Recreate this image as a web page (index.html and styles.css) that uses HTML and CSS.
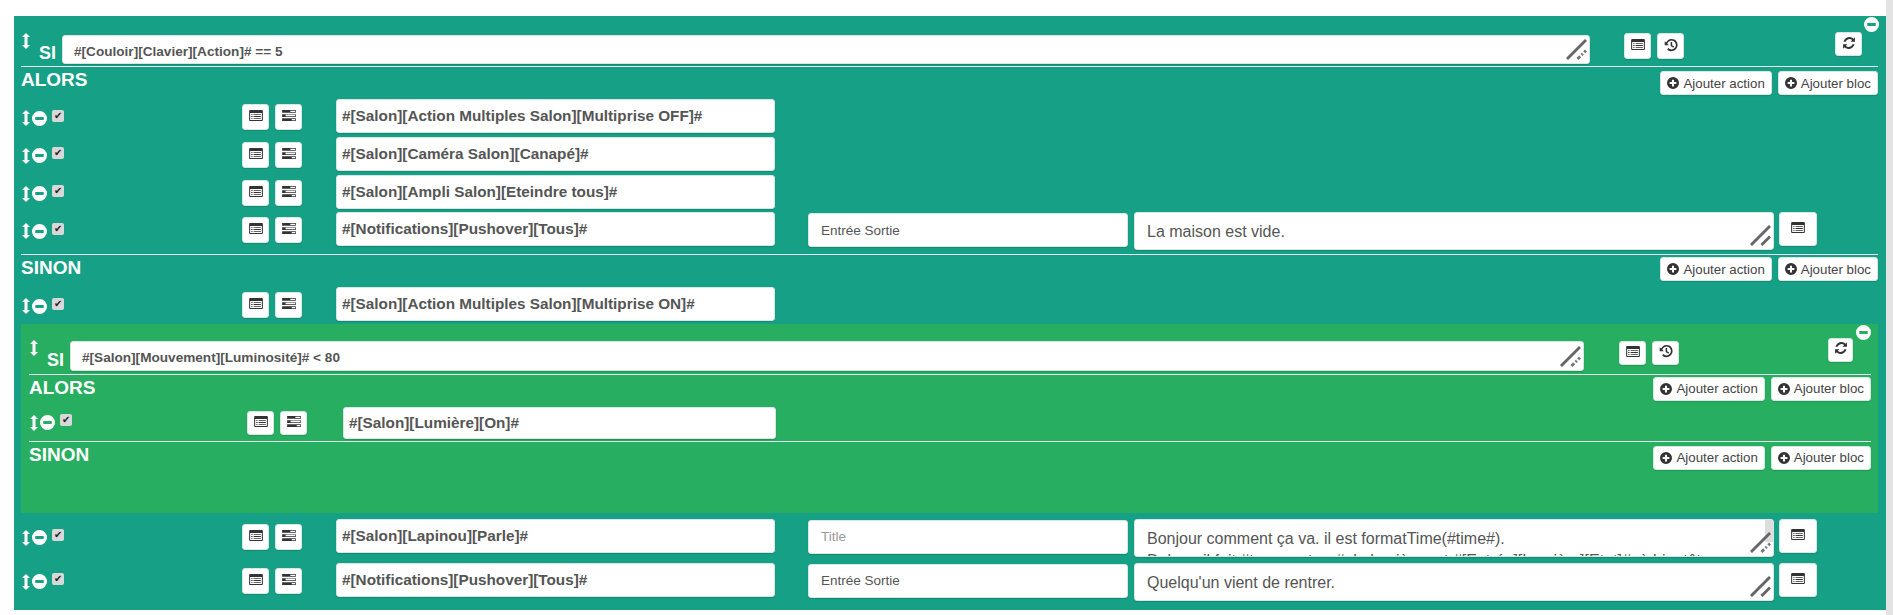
FILE: index.html
```html
<!DOCTYPE html>
<html lang="fr">
<head>
    <meta charset="UTF-8">
    <meta name="viewport" content="width=device-width, initial-scale=1.0">
    <title>Scénario</title>
    <link rel="stylesheet" href="styles.css">
</head>
<body>
    <svg class="sprites" width="0" height="0">
        <symbol id="i-arrows" viewBox="0 0 8 16"><path d="M4 0 8 4H5.500V12H8L4 16 0 12H2.500V4H0Z"/></symbol>
        <symbol id="i-minus" viewBox="0 0 16 16"><path fill-rule="evenodd" d="M8 0a8 8 0 1 1 0 16A8 8 0 0 1 8 0ZM3.500 6.500v3h9v-3Z"/></symbol>
        <symbol id="i-plus" viewBox="0 0 16 16"><path fill-rule="evenodd" d="M8 0a8 8 0 1 1 0 16A8 8 0 0 1 8 0ZM6.600 3.500v3.100H3.500v2.800h3.100v3.100h2.800V9.400h3.100V6.600H9.400V3.500Z"/></symbol>
        <symbol id="i-list" viewBox="0 0 20 16"><path fill-rule="evenodd" d="M1.500 0h17A1.500 1.500 0 0 1 20 1.500v13a1.500 1.500 0 0 1-1.500 1.500h-17A1.500 1.500 0 0 1 0 14.500v-13A1.500 1.500 0 0 1 1.500 0ZM1.500 4.500v10h17v-10ZM3 6h2v1.300H3Zm3.500 0H17v1.300H6.500ZM3 8.800h2v1.300H3Zm3.500 0H17v1.300H6.500ZM3 11.600h2v1.300H3Zm3.500 0H17v1.300H6.500Z"/></symbol>
        <symbol id="i-tasks" viewBox="0 0 20 16"><path fill-rule="evenodd" d="M0 0h20v4H0ZM12 1v2h7V1ZM0 6h20v4H0ZM5 7v2h14V7ZM0 12h20v4H0ZM14 13v2h5v-2Z"/></symbol>
        <symbol id="i-history" viewBox="0 0 16 16"><path d="M8.500 1A7 7 0 1 1 3.600 13l1.400-1.500A5 5 0 1 0 3.800 6.600L5.500 8.300H.8V3.600l1.600 1.600A7 7 0 0 1 8.500 1Z"/><path d="M7.600 4.500h1.700v3.700l2.300 1.500-.9 1.300-3.100-2Z"/></symbol>
        <symbol id="i-refresh" viewBox="0 0 16 16"><path d="M14.800 1.500v5H9.800l1.800-1.800A4.700 4.700 0 0 0 4 6.500H1.700A7 7 0 0 1 13.200 3.100ZM1.200 14.500v-5h5l-1.800 1.800A4.700 4.700 0 0 0 12 9.500h2.300A7 7 0 0 1 2.800 12.900Z"/></symbol>
        <symbol id="i-grip" viewBox="0 0 22 22"><path d="M1 21 21 1M12 21 21 12" fill="none" stroke="#666" stroke-width="3"/></symbol>
        <symbol id="i-grip-dots" viewBox="0 0 22 22"><path d="M1 21 21 1" fill="none" stroke="#666" stroke-width="3"/><path d="M12 21 21 12" fill="none" stroke="#777" stroke-width="3" stroke-dasharray="4 2 2 2"/></symbol>
    </svg>

    <div class="block">
        <svg class="ico remove-block"><use href="#i-minus"/></svg>
        <div class="si-row">
            <svg class="ico si-arrows"><use href="#i-arrows"/></svg>
            <span class="si-label">SI</span>
            <div class="field field-si">
                <textarea class="input si-input" rows="1">#[Couloir][Clavier][Action]# == 5</textarea>
                <svg class="grip"><use href="#i-grip-dots"/></svg>
            </div>
            <button class="icon-btn si-btn"><svg class="ico ico-list"><use href="#i-list"/></svg></button>
            <button class="icon-btn si-btn"><svg class="ico ico-small"><use href="#i-history"/></svg></button>
            <button class="icon-btn refresh-btn"><svg class="ico ico-small"><use href="#i-refresh"/></svg></button>
        </div>

        <div class="section-head">
            <span class="section-title">ALORS</span>
            <button class="add-btn"><svg class="ico ico-plus"><use href="#i-plus"/></svg>Ajouter action</button>
            <button class="add-btn"><svg class="ico ico-plus"><use href="#i-plus"/></svg>Ajouter bloc</button>
        </div>
        <div class="action">
            <div class="handles"><svg class="ico arrows"><use href="#i-arrows"/></svg><svg class="ico minus"><use href="#i-minus"/></svg><span class="check">✔</span></div>
            <button class="icon-btn"><svg class="ico ico-list"><use href="#i-list"/></svg></button>
            <button class="icon-btn"><svg class="ico ico-list"><use href="#i-tasks"/></svg></button>
            <input class="input cmd" value="#[Salon][Action Multiples Salon][Multiprise OFF]#">
        </div>
        <div class="action">
            <div class="handles"><svg class="ico arrows"><use href="#i-arrows"/></svg><svg class="ico minus"><use href="#i-minus"/></svg><span class="check">✔</span></div>
            <button class="icon-btn"><svg class="ico ico-list"><use href="#i-list"/></svg></button>
            <button class="icon-btn"><svg class="ico ico-list"><use href="#i-tasks"/></svg></button>
            <input class="input cmd" value="#[Salon][Caméra Salon][Canapé]#">
        </div>
        <div class="action">
            <div class="handles"><svg class="ico arrows"><use href="#i-arrows"/></svg><svg class="ico minus"><use href="#i-minus"/></svg><span class="check">✔</span></div>
            <button class="icon-btn"><svg class="ico ico-list"><use href="#i-list"/></svg></button>
            <button class="icon-btn"><svg class="ico ico-list"><use href="#i-tasks"/></svg></button>
            <input class="input cmd" value="#[Salon][Ampli Salon][Eteindre tous]#">
        </div>
        <div class="action">
            <div class="handles"><svg class="ico arrows"><use href="#i-arrows"/></svg><svg class="ico minus"><use href="#i-minus"/></svg><span class="check">✔</span></div>
            <button class="icon-btn"><svg class="ico ico-list"><use href="#i-list"/></svg></button>
            <button class="icon-btn"><svg class="ico ico-list"><use href="#i-tasks"/></svg></button>
            <input class="input cmd" value="#[Notifications][Pushover][Tous]#">
            <input class="input title" value="Entrée Sortie">
            <div class="field field-msg">
                <textarea class="input msg">La maison est vide.</textarea>
                <svg class="grip"><use href="#i-grip"/></svg>
            </div>
            <button class="icon-btn wide-btn"><svg class="ico ico-list"><use href="#i-list"/></svg></button>
        </div>

        <div class="section-head section-sinon">
            <span class="section-title">SINON</span>
            <button class="add-btn"><svg class="ico ico-plus"><use href="#i-plus"/></svg>Ajouter action</button>
            <button class="add-btn"><svg class="ico ico-plus"><use href="#i-plus"/></svg>Ajouter bloc</button>
        </div>
        <div class="action">
            <div class="handles"><svg class="ico arrows"><use href="#i-arrows"/></svg><svg class="ico minus"><use href="#i-minus"/></svg><span class="check">✔</span></div>
            <button class="icon-btn"><svg class="ico ico-list"><use href="#i-list"/></svg></button>
            <button class="icon-btn"><svg class="ico ico-list"><use href="#i-tasks"/></svg></button>
            <input class="input cmd" value="#[Salon][Action Multiples Salon][Multiprise ON]#">
        </div>

        <div class="block block-nested">
            <svg class="ico remove-block"><use href="#i-minus"/></svg>
            <div class="si-row">
                <svg class="ico si-arrows"><use href="#i-arrows"/></svg>
                <span class="si-label">SI</span>
                <div class="field field-si">
                    <textarea class="input si-input" rows="1">#[Salon][Mouvement][Luminosité]# &lt; 80</textarea>
                    <svg class="grip"><use href="#i-grip-dots"/></svg>
                </div>
                <button class="icon-btn si-btn"><svg class="ico ico-list"><use href="#i-list"/></svg></button>
                <button class="icon-btn si-btn"><svg class="ico ico-small"><use href="#i-history"/></svg></button>
                <button class="icon-btn refresh-btn"><svg class="ico ico-small"><use href="#i-refresh"/></svg></button>
            </div>
            <div class="section-head">
                <span class="section-title">ALORS</span>
                <button class="add-btn"><svg class="ico ico-plus"><use href="#i-plus"/></svg>Ajouter action</button>
                <button class="add-btn"><svg class="ico ico-plus"><use href="#i-plus"/></svg>Ajouter bloc</button>
            </div>
            <div class="action">
                <div class="handles"><svg class="ico arrows"><use href="#i-arrows"/></svg><svg class="ico minus"><use href="#i-minus"/></svg><span class="check">✔</span></div>
                <button class="icon-btn"><svg class="ico ico-list"><use href="#i-list"/></svg></button>
                <button class="icon-btn"><svg class="ico ico-list"><use href="#i-tasks"/></svg></button>
                <input class="input cmd" value="#[Salon][Lumière][On]#">
            </div>
            <div class="section-head section-sinon">
                <span class="section-title">SINON</span>
                <button class="add-btn"><svg class="ico ico-plus"><use href="#i-plus"/></svg>Ajouter action</button>
                <button class="add-btn"><svg class="ico ico-plus"><use href="#i-plus"/></svg>Ajouter bloc</button>
            </div>
        </div>

        <div class="action action-tall">
            <div class="handles"><svg class="ico arrows"><use href="#i-arrows"/></svg><svg class="ico minus"><use href="#i-minus"/></svg><span class="check">✔</span></div>
            <button class="icon-btn"><svg class="ico ico-list"><use href="#i-list"/></svg></button>
            <button class="icon-btn"><svg class="ico ico-list"><use href="#i-tasks"/></svg></button>
            <input class="input cmd" value="#[Salon][Lapinou][Parle]#">
            <input class="input title" placeholder="Title">
            <div class="field field-msg field-scroll">
                <textarea class="input msg">Bonjour comment ça va. il est formatTime(#time#).
Dehors il fait #temperature#, la lumière est #[Entrée][Lumière][Etat]#, à bientôt.</textarea>
                <svg class="grip"><use href="#i-grip-dots"/></svg>
            </div>
            <button class="icon-btn wide-btn"><svg class="ico ico-list"><use href="#i-list"/></svg></button>
        </div>
        <div class="action">
            <div class="handles"><svg class="ico arrows"><use href="#i-arrows"/></svg><svg class="ico minus"><use href="#i-minus"/></svg><span class="check">✔</span></div>
            <button class="icon-btn"><svg class="ico ico-list"><use href="#i-list"/></svg></button>
            <button class="icon-btn"><svg class="ico ico-list"><use href="#i-tasks"/></svg></button>
            <input class="input cmd" value="#[Notifications][Pushover][Tous]#">
            <input class="input title" value="Entrée Sortie">
            <div class="field field-msg">
                <textarea class="input msg">Quelqu'un vient de rentrer.</textarea>
                <svg class="grip"><use href="#i-grip"/></svg>
            </div>
            <button class="icon-btn wide-btn"><svg class="ico ico-list"><use href="#i-list"/></svg></button>
        </div>
    </div>
</body>
</html>
```

FILE: styles.css
```css
html {
    overflow: hidden;
}
body {
    font-family: "Liberation Sans", Arial, sans-serif;
    background-color: #ffffff;
    color: #555555;
    margin: 0;
    padding: 16px 7px 0 14px;
    height: 615px;
    box-sizing: border-box;
    box-shadow: inset -7px 0 0 #e3e3e3;
}
.sprites {
    position: absolute;
}
.ico {
    display: block;
    fill: #333333;
    flex: none;
}
.block {
    position: relative;
    background: #16a085;
    padding: 0 8px 0 7px;
    height: 594px;
    box-sizing: border-box;
}
.block-nested {
    background: #27ae60;
    height: 189px;
    margin: -1px 0 6px;
    padding: 0 7px 0 8px;
    width: 1857px;
}
.remove-block {
    position: absolute;
    top: 1px;
    right: 7px;
    width: 15px;
    height: 15px;
    fill: #ffffff;
}
.si-row {
    display: flex;
    align-items: flex-start;
    height: 50px;
    border-bottom: 1px solid #e8f5f1;
    position: relative;
}
.si-arrows {
    width: 8px;
    height: 16px;
    fill: #ffffff;
    margin: 17px 0 0 1px;
}
.si-label {
    color: #ffffff;
    font-weight: bold;
    font-size: 18px;
    margin: 27px 0 0 9px;
    width: 23px;
}
.field {
    position: relative;
}
.field-si {
    margin-top: 19px;
    width: 1528px;
    height: 29px;
}
.input {
    display: block;
    box-sizing: border-box;
    background: #ffffff;
    border: 1px solid #d6e8e3;
    border-radius: 3px;
    box-shadow: 0 1px 1px rgba(0, 0, 0, 0.15);
    color: #555555;
    font-family: inherit;
    outline: none;
    margin: 0;
}
.si-input {
    width: 100%;
    height: 100%;
    font-size: 13.6px;
    font-weight: bold;
    line-height: 15px;
    padding: 8px 11px 0;
    resize: none;
    overflow: hidden;
}
.grip {
    position: absolute;
    right: 3px;
    bottom: 4px;
    width: 21px;
    height: 21px;
    pointer-events: none;
}
.icon-btn {
    display: flex;
    align-items: center;
    justify-content: center;
    width: 27px;
    height: 26px;
    padding: 0 0 3px;
    background: #ffffff;
    border: 1px solid #d5e8e3;
    border-radius: 3px;
    box-shadow: 0 1px 1px rgba(0, 0, 0, 0.12);
    margin-right: 6px;
    margin-top: 5px;
    flex: none;
}
.si-btn {
    margin-top: 17px;
}
.si-row .si-btn:first-of-type {
    margin-left: 34px;
}
.refresh-btn {
    position: absolute;
    top: 16px;
    right: 16px;
    height: 24px;
    margin: 0;
}
.ico-list {
    width: 14px;
    height: 11px;
}
.ico-small {
    width: 14px;
    height: 14px;
}
.section-head {
    display: flex;
    align-items: flex-start;
    gap: 6px;
    height: 32px;
}
.section-sinon {
    border-top: 1px solid #e8f5f1;
    margin-top: 4px;
    box-sizing: border-box;
    height: 33px;
}
.section-title {
    color: #ffffff;
    font-weight: bold;
    font-size: 19px;
    margin: 3px auto 0 0;
    line-height: 20px;
}
.add-btn {
    display: flex;
    align-items: center;
    height: 24px;
    margin-top: 4px;
    padding: 0 6px;
    background: #ffffff;
    border: 1px solid #d5e8e3;
    border-radius: 3px;
    box-shadow: 0 1px 1px rgba(0, 0, 0, 0.12);
    color: #444444;
    font-family: inherit;
    font-size: 13.3px;
    white-space: nowrap;
}
.section-sinon .add-btn {
    margin-top: 2px;
}
.block-nested .section-head .add-btn {
    margin-top: 2px;
}
.block-nested .section-sinon {
    margin-top: 0;
}
.block-nested .section-sinon .add-btn {
    margin-top: 4px;
}
.ico-plus {
    width: 12px;
    height: 12px;
    margin-right: 4px;
}
.action {
    display: flex;
    align-items: flex-start;
    height: 37.75px;
}
.action-tall {
    height: 44px;
}
.handles {
    display: flex;
    align-items: center;
    width: 221px;
    height: 38px;
    flex: none;
    padding-left: 1px;
    box-sizing: border-box;
}
.arrows {
    width: 8px;
    height: 16px;
    fill: #ffffff;
    margin-right: 2px;
}
.minus {
    width: 15px;
    height: 15px;
    fill: #ffffff;
    margin-right: 5px;
}
.check {
    display: block;
    width: 12px;
    height: 12px;
    line-height: 12px;
    font-size: 10px;
    text-align: center;
    color: #222222;
    background: #d8d8d8;
    border-radius: 2px;
    margin-top: -5px;
}
.cmd {
    width: 439px;
    height: 34px;
    margin-left: 28px;
    padding: 0 5px;
    font-size: 15.3px;
    font-weight: bold;
    flex: none;
}
.title {
    width: 320px;
    height: 34px;
    margin: 1px 0 0 33px;
    padding: 0 12px;
    font-size: 13.5px;
    flex: none;
}
.title::placeholder {
    color: #999999;
}
.field-msg {
    width: 640px;
    height: 38px;
    margin-left: 6px;
    flex: none;
}
.field-scroll::before {
    content: "";
    position: absolute;
    top: 1px;
    right: 1px;
    width: 8px;
    height: 22px;
    background: #dddddd;
}
.msg {
    width: 100%;
    height: 100%;
    font-size: 16px;
    padding: 8px 12px 0;
    resize: none;
    overflow: hidden;
    line-height: 22px;
}
.wide-btn {
    width: 38px;
    height: 34px;
    margin: 0 0 0 5px;
}
.block-nested .action {
    height: 34px;
}
.block-nested .handles {
    width: 218px;
    height: 32px;
}
.block-nested .icon-btn {
    height: 24px;
    margin-top: 4px;
}
.block-nested .cmd {
    width: 433px;
    height: 32px;
    margin-left: 30px;
}
.block-nested .si-arrows {
    margin-top: 16px;
}
.block-nested .si-label {
    margin-top: 26px;
}
.block-nested .field-si {
    margin-top: 17px;
    width: 1514px;
    height: 30px;
}
.block-nested .si-btn {
    margin-top: 17px;
}
.block-nested .si-row .si-btn:first-of-type {
    margin-left: 35px;
}
.block-nested .refresh-btn {
    top: 14px;
    right: 18px;
    margin: 0;
    width: 25px;
}
```
